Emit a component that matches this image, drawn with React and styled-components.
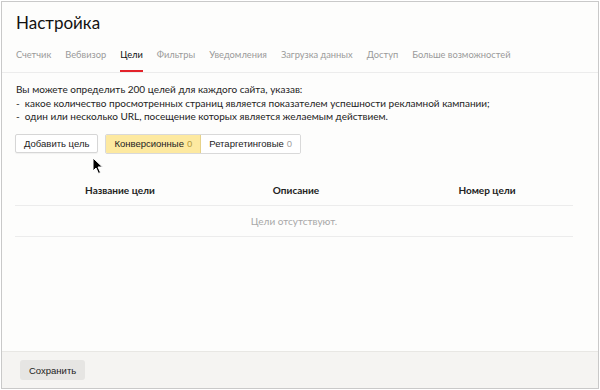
import React from "react";
import styled, { createGlobalStyle } from "styled-components";

const Global = createGlobalStyle`
  html, body { margin: 0; padding: 0; background: #ffffff; }
  body { font-family: Lato, "Liberation Sans", Arial, sans-serif; }
  * { box-sizing: border-box; }
`;

const Frame = styled.div`
  width: 598px;
  height: 388px;
  margin: 1px 0 0 1px;
  border: 1px solid #c9c9c9;
  background: #fdfdfc;
  display: flex;
  flex-direction: column;
  position: relative;
`;

const Content = styled.div`
  flex: 1;
  display: flex;
  flex-direction: column;
`;

const Title = styled.h1`
  margin: 8px 0 0 14px;
  height: 26px;
  font-family: Lato, sans-serif;
  font-weight: 400;
  font-size: 17px;
  line-height: 26px;
  color: #111;
`;

const Tabs = styled.nav`
  display: flex;
  gap: 14px;
  padding: 0 0 0 14px;
  border-bottom: 1px solid #ececec;
  height: 37px;
`;

const Tab = styled.div`
  font-family: Lato, sans-serif;
  font-size: 9.3px;
  line-height: 14px;
  padding-top: 12px;
  height: 36px;
  white-space: nowrap;
  color: ${(p) => (p.$active ? "#111" : "#9a9a9a")};
  border-bottom: 2px solid ${(p) => (p.$active ? "#e3232a" : "transparent")};
`;

const Intro = styled.div`
  margin: 10px 0 0 14px;
  font-family: Lato, sans-serif;
  font-size: 10px;
  line-height: 13.5px;
  color: #222;
`;

const Buttons = styled.div`
  display: flex;
  gap: 7px;
  margin: 10px 0 0 13px;
  align-items: center;
`;

const Button = styled.button`
  height: 19px;
  padding: 0 8px;
  border: 1px solid #d6d6d6;
  border-radius: 2px;
  background: #fff;
  font-family: "Liberation Sans", Arial, sans-serif;
  font-size: 9.5px;
  color: #222;
  box-shadow: 0 1px 1px rgba(0, 0, 0, 0.05);
`;

const Segmented = styled.div`
  display: flex;
  border: 1px solid #d9d9d9;
  border-radius: 2px;
  overflow: hidden;
`;

const Segment = styled.div`
  height: 18px;
  padding: 0 8px;
  display: flex;
  align-items: center;
  gap: 3px;
  font-family: "Liberation Sans", Arial, sans-serif;
  font-size: 9.5px;
  color: #222;
  background: ${(p) => (p.$active ? "#fde9a0" : "#fff")};
  border-right: ${(p) => (p.$active ? "1px solid #e6d28a" : "none")};
`;

const Count = styled.span`
  color: ${(p) => (p.$active ? "#b39a3a" : "#a0a0a0")};
`;

const Table = styled.div`
  margin: 22px 0 0 13px;
  width: 558px;
`;

const HeadRow = styled.div`
  display: grid;
  grid-template-columns: 210px 142px 1fr;
  height: 30px;
  align-items: center;
  border-bottom: 1px solid #ececec;
  font-family: Lato, sans-serif;
  font-weight: 700;
  font-size: 10px;
  color: #222;
`;

const HeadCell = styled.div`
  text-align: center;
  padding-left: ${(p) => p.$pl || 0}px;
`;

const EmptyRow = styled.div`
  height: 31px;
  display: flex;
  align-items: center;
  justify-content: center;
  border-bottom: 1px solid #ececec;
  font-family: Lato, sans-serif;
  font-size: 10px;
  color: #a8a8a8;
`;

const Footer = styled.div`
  height: 37px;
  background: #f5f4f2;
  border-top: 1px solid #e8e7e4;
  display: flex;
  align-items: center;
  padding-left: 18px;
`;

const SaveButton = styled.button`
  height: 20px;
  padding: 0 9px;
  border: none;
  border-radius: 3px;
  background: #e6e5e3;
  font-family: "Liberation Sans", Arial, sans-serif;
  font-size: 9.5px;
  color: #222;
`;

const Cursor = styled.svg`
  position: absolute;
  left: 90px;
  top: 155px;
`;

const tabs = [
  "Счетчик",
  "Вебвизор",
  "Цели",
  "Фильтры",
  "Уведомления",
  "Загрузка данных",
  "Доступ",
  "Больше возможностей",
];

export default function App() {
  return (
    <>
      <Global />
      <Frame>
        <Content>
          <Title>Настройка</Title>
          <Tabs>
            {tabs.map((t) => (
              <Tab key={t} $active={t === "Цели"}>
                {t}
              </Tab>
            ))}
          </Tabs>
          <Intro>
            Вы можете определить 200 целей для каждого сайта, указав:
            <br />-&nbsp; какое количество просмотренных страниц является показателем успешности рекламной кампании;
            <br />-&nbsp; один или несколько URL, посещение которых является желаемым действием.
          </Intro>
          <Buttons>
            <Button>Добавить цель</Button>
            <Segmented>
              <Segment $active>
                Конверсионные <Count $active>0</Count>
              </Segment>
              <Segment>
                Ретаргетинговые <Count>0</Count>
              </Segment>
            </Segmented>
          </Buttons>
          <Table>
            <HeadRow>
              <HeadCell>Название цели</HeadCell>
              <HeadCell>Описание</HeadCell>
              <HeadCell $pl={34}>Номер цели</HeadCell>
            </HeadRow>
            <EmptyRow>Цели отсутствуют.</EmptyRow>
          </Table>
        </Content>
        <Footer>
          <SaveButton>Сохранить</SaveButton>
        </Footer>
        <Cursor width="12" height="18" viewBox="0 0 12 18">
          <path d="M1 1 L1 14 L4 11 L6.5 16.5 L8.5 15.5 L6 10 L10.5 10 Z" fill="#000" stroke="#fff" strokeWidth="1" />
        </Cursor>
      </Frame>
    </>
  );
}
